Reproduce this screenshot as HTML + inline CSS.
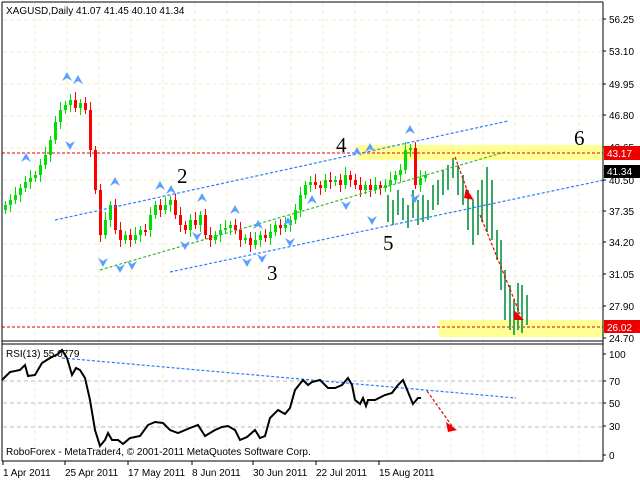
<!DOCTYPE html><html><head><meta charset="utf-8"><style>
html,body{margin:0;padding:0;background:#fff;width:640px;height:480px;overflow:hidden}
svg{display:block;font-family:"Liberation Sans",sans-serif}
</style></head><body>
<svg id="s" width="640" height="480" viewBox="0 0 640 480" xmlns="http://www.w3.org/2000/svg">
<g id="grid" stroke="#ececc8" stroke-dasharray="4,3" stroke-width="1"></g>
<rect x="358" y="145" width="245" height="15" fill="#ffff80" opacity="0.85"/>
<rect x="439" y="320" width="164" height="17" fill="#ffff80" opacity="0.85"/>
<line x1="2" y1="153" x2="603" y2="153" stroke="#d00" stroke-dasharray="3,2"/>
<line x1="2" y1="327" x2="603" y2="327" stroke="#d00" stroke-dasharray="3,2"/>
<g id="proj" stroke="#3aa865" stroke-width="2"></g>
<g id="cand"></g>
<g fill="none" stroke-dasharray="3,2" stroke-width="1.2">
<line x1="55" y1="220" x2="508" y2="121" stroke="#2a7fff"/>
<line x1="170" y1="272" x2="604" y2="180" stroke="#2a7fff"/>
<line x1="100" y1="270" x2="505" y2="152" stroke="#3cb53c"/>
<line x1="455" y1="157" x2="470" y2="198" stroke="#e00"/>
<line x1="480" y1="215" x2="520" y2="314" stroke="#e00"/>
<line x1="62" y1="358" x2="516" y2="398" stroke="#2a7fff"/>
<line x1="427" y1="391" x2="452" y2="426" stroke="#e00"/>
</g>
<polygon points="466,188 474,200 464,198" fill="#e00"/>
<polygon points="514,310 524,320 514,320" fill="#e00"/>
<polygon points="446,422 457,430 448,432" fill="#e00"/>
<g id="fr" fill="#5aa0ff"></g>
<g font-family="'Liberation Serif',serif" font-size="21" fill="#000">
<text x="177" y="183">2</text><text x="267" y="280">3</text><text x="336" y="152">4</text><text x="383" y="250">5</text><text x="574" y="145">6</text>
</g>
<line x1="2" y1="2" x2="603" y2="2" stroke="#000"/>
<line x1="2" y1="2" x2="2" y2="461" stroke="#000"/>
<line x1="603" y1="2" x2="603" y2="461" stroke="#000"/>
<line x1="2" y1="341" x2="603" y2="341" stroke="#000"/>
<line x1="2" y1="344" x2="603" y2="344" stroke="#000"/>
<line x1="2" y1="461" x2="603" y2="461" stroke="#000"/>
<polyline id="rsi" fill="none" stroke="#000" stroke-width="2"/>
<g font-size="10" fill="#000" id="ax"></g>
<rect x="604" y="146" width="36" height="14" fill="#e00"/><text x="607" y="157" font-size="10" fill="#fff">43.17</text>
<rect x="604" y="165" width="36" height="13" fill="#000"/><text x="607" y="175" font-size="10" fill="#fff">41.34</text>
<rect x="604" y="320" width="36" height="13" fill="#e00"/><text x="607" y="331" font-size="10" fill="#fff">26.02</text>
<text x="6" y="14" font-size="10">XAGUSD,Daily  41.07 41.45 40.10 41.34</text>
<text x="6" y="357" font-size="10">RSI(13) 55.0779</text>
<text x="6" y="455" font-size="10">RoboForex - MetaTrader4, © 2001-2011 MetaQuotes Software Corp.</text>
</svg>
<script>
var NS="http://www.w3.org/2000/svg";
function el(g,t,a){var e=document.createElementNS(NS,t);for(var k in a)e.setAttribute(k,a[k]);document.getElementById(g).appendChild(e);return e;}
[20,52,84,116,148,180,212,244,276,308].forEach(function(y){el('grid','line',{x1:3,y1:y,x2:602,y2:y});});
[381,403,427].forEach(function(y){el('grid','line',{x1:3,y1:y,x2:602,y2:y,stroke:'#bbb'});});
for(var x=35;x<600;x+=32)el('grid','line',{x1:x,y1:3,x2:x,y2:460});
var c=[205,200,195,188,182,178,175,165,155,140,122,110,105,100,108,103,110,150,190,235,220,205,230,240,235,240,235,230,230,215,205,210,205,200,215,225,230,220,225,215,235,240,235,230,228,225,230,240,238,245,240,235,238,232,225,228,225,220,210,195,185,182,185,188,180,182,180,185,175,180,185,190,185,190,185,188,185,180,175,170,150,148,185,178,175];
var p=c[0]+5;
c.forEach(function(y,i){var x=4+i*5,o=p,up=y<o;var col=up?'#00e000':'#f00';
var t=Math.min(o,y),b=Math.max(o,y);if(b-t<2)b=t+2;
el('cand','line',{x1:x+1.5,y1:t-4-(i%3)*2,x2:x+1.5,y2:b+4+(i%2)*3,stroke:col});
el('cand','rect',{x:x,y:t,width:3,height:b-t,fill:col});p=y;});
var pr=[[388,195,222],[393,200,225],[398,190,215],[403,198,220],[408,205,228],[413,190,218],[418,200,225],[423,195,222],[428,200,220],[433,185,210],[438,180,205],[443,170,195],[448,165,190],[453,158,178],[458,165,195],[463,175,205],[468,190,230],[473,200,245],[478,190,235],[482,180,222],[487,167,232],[492,180,240],[497,230,260],[501,240,290],[505,270,320],[510,285,330],[514,300,335],[518,283,330],[522,285,333],[527,295,325]];
pr.forEach(function(b){el('proj','line',{x1:b[0],y1:b[1],x2:b[0],y2:b[2]});});
var fu=[[26,158],[67,77],[78,80],[115,182],[160,186],[171,190],[202,198],[235,210],[258,225],[288,222],[312,200],[357,152],[370,148],[410,130]];
fu.forEach(function(f){el('fr','polygon',{points:(f[0]-5)+','+(f[1]+4)+' '+f[0]+','+(f[1]-5)+' '+(f[0]+5)+','+(f[1]+4)+' '+f[0]+','+(f[1]+1)});});
var fd=[[70,145],[103,262],[120,268],[132,265],[185,245],[197,236],[247,262],[262,258],[290,242],[346,205],[372,220],[415,198]];
fd.forEach(function(f){el('fr','polygon',{points:(f[0]-5)+','+(f[1]-4)+' '+f[0]+','+(f[1]+5)+' '+(f[0]+5)+','+(f[1]-4)+' '+f[0]+','+(f[1]-1)});});
document.getElementById('rsi').setAttribute('points',"2,380 10,372 20,370 25,365 28,376 35,375 42,363 50,358 58,354 62,350 67,358 72,375 76,368 80,370 85,378 90,400 95,430 100,446 105,440 108,433 112,440 118,440 123,444 130,438 140,436 148,425 155,422 163,423 170,430 178,433 190,428 198,425 205,436 215,430 222,427 228,426 235,430 240,440 247,437 255,430 260,438 265,436 270,418 278,410 285,414 290,408 295,390 303,380 308,385 312,382 320,380 328,388 335,388 342,385 348,378 352,385 355,400 360,404 363,398 366,406 368,400 375,400 385,395 392,393 398,385 403,380 408,392 413,404 418,398 421,398");
[["56.25",23],["53.10",55],["49.95",88],["46.80",119],["43.65",151],["40.50",184],["37.35",215],["34.20",246],["31.05",278],["27.90",310],["24.70",342],["100",358],["70",385],["50",407],["30",430],["0",459]].forEach(function(l){el('ax','line',{x1:603,y1:l[1]-4,x2:606,y2:l[1]-4,stroke:'#000'});var t=el('ax','text',{x:609,y:l[1]});t.textContent=l[0];});
[["1 Apr 2011",3],["25 Apr 2011",65],["17 May 2011",128],["8 Jun 2011",192],["30 Jun 2011",253],["22 Jul 2011",316],["15 Aug 2011",379]].forEach(function(l){el('ax','line',{x1:l[1],y1:461,x2:l[1],y2:465,stroke:'#000'});var t=el('ax','text',{x:l[1],y:476});t.textContent=l[0];});
</script>
</body></html>
